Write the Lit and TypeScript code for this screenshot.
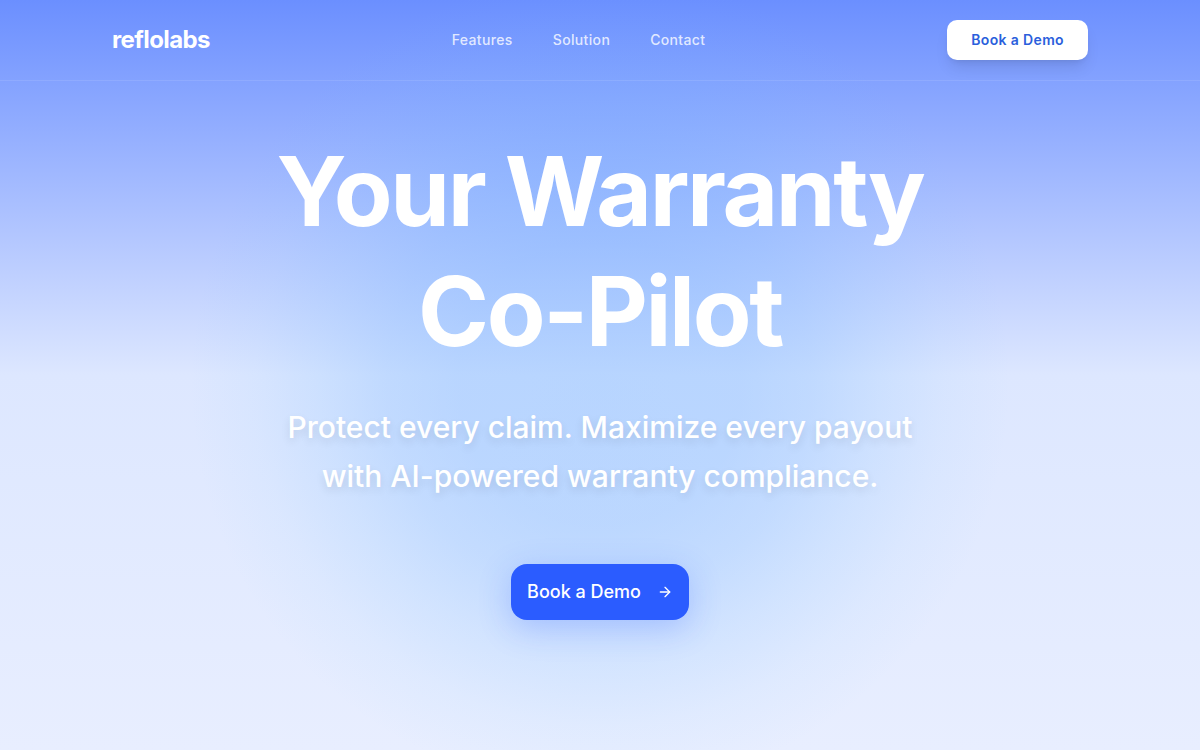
import { LitElement, html, css } from "lit";
import { customElement } from "lit/decorators.js";

@customElement("app-root")
export class AppRoot extends LitElement {
  static styles = css`
    :host {
      display: block;
      font-family: Inter, "Liberation Sans", sans-serif;
      color: #fff;
    }
    * {
      box-sizing: border-box;
    }
    .page {
      display: flex;
      flex-direction: column;
      min-height: 100vh;
      background:
        radial-gradient(
          circle 410px at 50% 51%,
          rgba(96, 170, 255, 0.3) 0%,
          rgba(96, 170, 255, 0.29) 35%,
          rgba(96, 172, 255, 0.23) 52%,
          rgba(100, 180, 255, 0.14) 68%,
          rgba(110, 190, 255, 0.06) 84%,
          rgba(110, 190, 255, 0) 100%
        ),
        linear-gradient(180deg, #6b8fff 0%, #dde7ff 50%, #e8eeff 100%);
    }
    .header {
      border-bottom: 1px solid rgba(255, 255, 255, 0.1);
    }
    .bar {
      display: flex;
      align-items: center;
      justify-content: space-between;
      max-width: 1024px;
      margin: 0 auto;
      padding: 20px 24px;
    }
    a {
      color: inherit;
      text-decoration: none;
    }
    .logo {
      font-size: 24px;
      line-height: 32px;
      font-weight: 700;
      letter-spacing: -0.025em;
    }
    .nav {
      display: flex;
      gap: 40px;
      font-size: 14px;
      line-height: 20px;
      font-weight: 500;
      letter-spacing: 0.025em;
      color: rgba(255, 255, 255, 0.8);
    }
    button {
      border: 0;
      font-family: inherit;
      cursor: pointer;
    }
    .demo {
      padding: 10px 24px;
      border-radius: 10px;
      background: #fff;
      color: #2b5fdc;
      font-size: 14px;
      line-height: 20px;
      font-weight: 600;
      letter-spacing: 0.025em;
      box-shadow:
        0 10px 15px -3px rgba(0, 0, 0, 0.1),
        0 4px 6px -4px rgba(0, 0, 0, 0.1);
    }
    .hero {
      flex: 1;
      display: flex;
      flex-direction: column;
      align-items: center;
      justify-content: center;
      padding: 0 24px 80px;
      text-align: center;
    }
    .title {
      max-width: 896px;
      margin: 0 0 32px;
      font-size: 96px;
      line-height: 120px;
      font-weight: 700;
      letter-spacing: -0.025em;
    }
    .line {
      display: block;
    }
    .lead {
      max-width: 672px;
      margin: 0 0 63px;
      font-size: 30px;
      line-height: 49px;
      font-weight: 500;
      text-shadow: 0 4px 8px rgba(0, 0, 0, 0.1);
    }
    .cta {
      display: inline-flex;
      align-items: center;
      gap: 16px;
      padding: 14px 16px;
      border-radius: 16px;
      background: #2b5cff;
      color: #fff;
      font-size: 18px;
      line-height: 28px;
      font-weight: 500;
      box-shadow: 0 8px 32px rgba(43, 92, 255, 0.25);
    }
    .arrow {
      width: 16px;
      height: 16px;
    }
  `;

  render() {
    return html`
      <div class="page">
        <header class="header">
          <div class="bar">
            <a class="logo" href="#">reflolabs</a>
            <nav class="nav">
              <a href="#features">Features</a>
              <a href="#solution">Solution</a>
              <a href="#contact">Contact</a>
            </nav>
            <button class="demo" type="button">Book a Demo</button>
          </div>
        </header>
        <main class="hero">
          <h1 class="title">
            <span class="line">Your Warranty</span>
            <span class="line">Co-Pilot</span>
          </h1>
          <p class="lead">
            Protect every claim. Maximize every payout with AI-powered warranty
            compliance.
          </p>
          <button class="cta" type="button">
            Book a Demo
            <svg
              class="arrow"
              viewBox="0 0 24 24"
              fill="none"
              stroke="currentColor"
              stroke-width="2"
              stroke-linecap="round"
              stroke-linejoin="round"
              aria-hidden="true"
            >
              <path d="M5 12h14"></path>
              <path d="m12 5 7 7-7 7"></path>
            </svg>
          </button>
        </main>
      </div>
    `;
  }
}
